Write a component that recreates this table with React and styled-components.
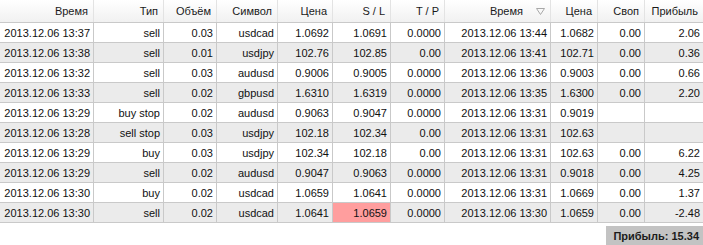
import React from 'react';
import styled, { createGlobalStyle } from 'styled-components';

const GlobalStyle = createGlobalStyle`
  body {
    margin: 0;
    background: #fff;
    font-family: "Liberation Sans", Arial, sans-serif;
    font-size: 11px;
    color: #111;
  }
`;

const COLS = '94px 70px 53px 61px 55px 58px 54px 106px 47px 47px 58px';

const Wrap = styled.div`
  width: 703px;
  height: 245px;
  overflow: hidden;
  display: flex;
  flex-direction: column;
`;

const HeadRow = styled.div`
  display: grid;
  grid-template-columns: ${COLS};
  height: 23px;
  box-sizing: border-box;
  background: linear-gradient(#ffffff, #f1f1f1);
  border-bottom: 1px solid #c9c9c9;
`;

const HeadCell = styled.div`
  display: flex;
  align-items: center;
  justify-content: flex-end;
  gap: 13px;
  padding-right: 5px;
  border-right: 1px solid #e3e3e3;
  color: #1a1a1a;
  white-space: nowrap;
  &:last-child {
    border-right: none;
  }
`;

const Row = styled.div`
  display: grid;
  grid-template-columns: ${COLS};
  height: 20px;
  box-sizing: border-box;
  border-bottom: 1px solid #c9c9c9;
  background: ${(p) => (p.$alt ? '#ebebeb' : '#ffffff')};
`;

const Cell = styled.div`
  display: flex;
  align-items: center;
  justify-content: flex-end;
  padding-right: 3px;
  border-right: 1px solid #c9c9c9;
  white-space: nowrap;
  background: ${(p) => (p.$hit ? '#ff9e9e' : 'transparent')};
  &:last-child {
    border-right: none;
  }
`;

const Footer = styled.div`
  display: flex;
  justify-content: flex-end;
  margin-top: 3px;
`;

const Total = styled.div`
  width: 97px;
  height: 19px;
  box-sizing: border-box;
  background: #c3c3c3;
  font-weight: bold;
  color: #1c1c1c;
  display: flex;
  align-items: center;
  justify-content: flex-end;
  padding-right: 4px;
`;

const SortMark = () => (
  <svg width="9" height="7" viewBox="0 0 9 7">
    <path d="M0.5 0.5 H8.5 L4.5 6.5 Z" fill="none" stroke="#a8a8a8" strokeWidth="1" />
  </svg>
);

const headers = ['Время', 'Тип', 'Объём', 'Символ', 'Цена', 'S / L', 'T / P', 'Время', 'Цена', 'Своп', 'Прибыль'];

const rows = [
  ['2013.12.06 13:37', 'sell', '0.03', 'usdcad', '1.0692', '1.0691', '0.0000', '2013.12.06 13:44', '1.0682', '0.00', '2.06'],
  ['2013.12.06 13:38', 'sell', '0.01', 'usdjpy', '102.76', '102.85', '0.00', '2013.12.06 13:41', '102.71', '0.00', '0.36'],
  ['2013.12.06 13:32', 'sell', '0.03', 'audusd', '0.9006', '0.9005', '0.0000', '2013.12.06 13:36', '0.9003', '0.00', '0.66'],
  ['2013.12.06 13:33', 'sell', '0.02', 'gbpusd', '1.6310', '1.6319', '0.0000', '2013.12.06 13:35', '1.6300', '0.00', '2.20'],
  ['2013.12.06 13:29', 'buy stop', '0.02', 'audusd', '0.9063', '0.9047', '0.0000', '2013.12.06 13:31', '0.9019', '', ''],
  ['2013.12.06 13:28', 'sell stop', '0.03', 'usdjpy', '102.18', '102.34', '0.00', '2013.12.06 13:31', '102.63', '', ''],
  ['2013.12.06 13:29', 'buy', '0.03', 'usdjpy', '102.34', '102.18', '0.00', '2013.12.06 13:31', '102.63', '0.00', '6.22'],
  ['2013.12.06 13:29', 'sell', '0.02', 'audusd', '0.9047', '0.9063', '0.0000', '2013.12.06 13:31', '0.9018', '0.00', '4.25'],
  ['2013.12.06 13:30', 'buy', '0.02', 'usdcad', '1.0659', '1.0641', '0.0000', '2013.12.06 13:31', '1.0669', '0.00', '1.37'],
  ['2013.12.06 13:30', 'sell', '0.02', 'usdcad', '1.0641', '1.0659', '0.0000', '2013.12.06 13:30', '1.0659', '0.00', '-2.48'],
];

export default function App() {
  return (
    <>
      <GlobalStyle />
      <Wrap>
        <HeadRow>
          {headers.map((h, i) => (
            <HeadCell key={i}>
              {h}
              {i === 7 && <SortMark />}
            </HeadCell>
          ))}
        </HeadRow>
        {rows.map((r, ri) => (
          <Row key={ri} $alt={ri % 2 === 1}>
            {r.map((v, ci) => (
              <Cell key={ci} $hit={ri === 9 && ci === 5}>{v}</Cell>
            ))}
          </Row>
        ))}
        <Footer>
          <Total>Прибыль: 15.34</Total>
        </Footer>
      </Wrap>
    </>
  );
}
